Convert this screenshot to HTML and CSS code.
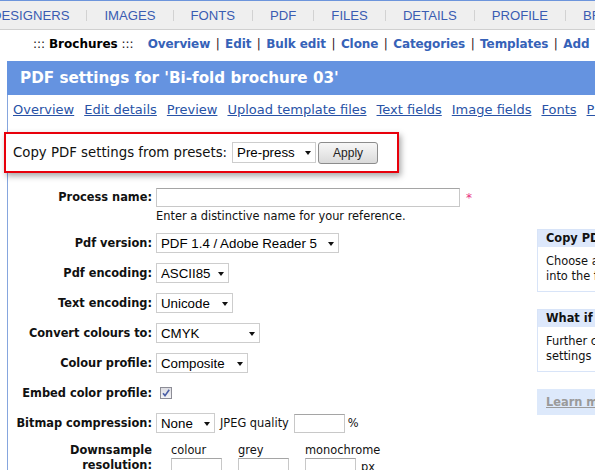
FILE: index.html
```html
<!DOCTYPE html>
<html>
<head>
<meta charset="utf-8">
<title>PDF settings</title>
<link rel="stylesheet" href="styles.css">
</head>
<body>
<nav class="topnav">
  <a class="first">DESIGNERS</a><span class="bar"></span>
  <a>IMAGES</a><span class="bar"></span>
  <a>FONTS</a><span class="bar"></span>
  <a>PDF</a><span class="bar"></span>
  <a>FILES</a><span class="bar"></span>
  <a>DETAILS</a><span class="bar"></span>
  <a>PROFILE</a><span class="bar"></span>
  <a>BROCHURES</a>
</nav>
<div class="subnav">
  <span class="crumb">::: <b>Brochures</b> :::</span>
  <a>Overview</a><span class="sep">|</span><a>Edit</a><span class="sep">|</span><a>Bulk edit</a><span class="sep">|</span><a>Clone</a><span class="sep">|</span><a>Categories</a><span class="sep">|</span><a>Templates</a><span class="sep">|</span><a>Add</a>
</div>
<div class="panel">
  <h1 class="title">PDF settings for 'Bi-fold brochure 03'</h1>
  <div class="tabs">
    <a>Overview</a><a>Edit details</a><a>Preview</a><a>Upload template files</a><a>Text fields</a><a>Image fields</a><a>Fonts</a><a>PDF settings</a>
  </div>
  <div class="preset">
    <span class="preset-label">Copy PDF settings from presets:</span>
    <span class="sel"><select class="w-pre tall"><option>Pre-press</option></select></span>
    <button class="apply" type="button">Apply</button>
  </div>
  <div class="columns">
    <form class="form">
      <div class="row row-top">
        <label class="lbl lbl-input">Process name:</label>
        <div class="ctl">
          <div class="line"><input class="txt w-name" type="text"><span class="req">*</span></div>
          <div class="help">Enter a distinctive name for your reference.</div>
        </div>
      </div>
      <div class="row">
        <label class="lbl">Pdf version:</label>
        <span class="sel"><select class="w-ver"><option>PDF 1.4 / Adobe Reader 5</option></select></span>
      </div>
      <div class="row">
        <label class="lbl">Pdf encoding:</label>
        <span class="sel"><select class="w-enc"><option>ASCII85</option></select></span>
      </div>
      <div class="row">
        <label class="lbl">Text encoding:</label>
        <span class="sel"><select class="w-txt"><option>Unicode</option></select></span>
      </div>
      <div class="row">
        <label class="lbl">Convert colours to:</label>
        <span class="sel"><select class="w-cmyk"><option>CMYK</option></select></span>
      </div>
      <div class="row">
        <label class="lbl">Colour profile:</label>
        <span class="sel"><select class="w-prof"><option>Composite</option></select></span>
      </div>
      <div class="row">
        <label class="lbl">Embed color profile:</label>
        <span class="check"><svg width="10" height="10" viewBox="0 0 10 10"><path d="M2 5.2 L4 7.6 L8.2 1.8" fill="none" stroke="#4b5fa6" stroke-width="1.6"/></svg></span>
      </div>
      <div class="row">
        <label class="lbl">Bitmap compression:</label>
        <span class="sel"><select class="w-bmp"><option>None</option></select></span>
        <span class="small ml5">JPEG quality</span>
        <input class="txt w-q ml5" type="text">
        <span class="small ml3">%</span>
      </div>
      <div class="row row-top">
        <label class="lbl lbl-two">Downsample<br>resolution:</label>
        <div class="ds">
          <div class="ds-col"><span class="small">colour</span><input class="txt w-q" type="text"></div>
          <div class="ds-col"><span class="small">grey</span><input class="txt w-q" type="text"></div>
          <div class="ds-col"><span class="small">monochrome</span><input class="txt w-q" type="text"></div>
          <span class="small px">px</span>
        </div>
      </div>
    </form>
    <aside class="side">
      <div class="box">
        <div class="box-head">Copy PDF settings</div>
        <div class="box-body">Choose a preset and press Apply to<br>into the form below.</div>
      </div>
      <div class="box">
        <div class="box-head">What if the preset doesn't fit?</div>
        <div class="box-body">Further changes can be made to the<br>settings afterwards.</div>
      </div>
      <div class="learn"><a>Learn more about PDF settings</a></div>
    </aside>
  </div>
</div>
</body>
</html>
```
FILE: styles.css
```css
html, body {
  margin: 0;
  padding: 0;
  overflow: hidden;
  background: #fff;
}
body {
  width: 595px;
  height: 470px;
  font-family: "DejaVu Sans", Verdana, sans-serif;
  color: #111;
}

/* top navigation */
.topnav {
  display: flex;
  align-items: center;
  height: 27px;
  padding-top: 1px;
  box-sizing: content-box;
  background: #efefef;
  border-top: 1px solid #6d95dc;
  border-bottom: 1px solid #d0d0d0;
  white-space: nowrap;
  overflow: hidden;
  font: 13.15px "Liberation Sans", Arial, sans-serif;
}
.topnav a {
  color: #3a5cb2;
  padding: 0 17px;
  flex: none;
}
.topnav a.first {
  margin-left: -25px;
}
.topnav .bar {
  flex: none;
  width: 1px;
  height: 11px;
  background: #d2d2d2;
}

/* sub navigation */
.subnav {
  padding: 7px 0 10px 33px;
  height: 14px;
  line-height: 14px;
  font-size: 12px;
  font-weight: bold;
  letter-spacing: -0.1px;
  white-space: nowrap;
  overflow: hidden;
}
.subnav .crumb {
  font-weight: normal;
  color: #111;
  letter-spacing: 0;
  margin-right: 10px;
}
.subnav .crumb b {
  font-weight: bold;
  color: #000;
}
.subnav a {
  color: #3662b8;
}
.subnav .sep {
  font-weight: normal;
  color: #2a1020;
  margin: 0 5.5px;
}

/* panel */
.panel {
  margin-left: 7px;
  border-left: 1px solid #86a6de;
}
.title {
  margin: 0 0 0 -1px;
  height: 34px;
  display: flex;
  align-items: center;
  padding-left: 13px;
  background: #6593e0;
  color: #fff;
  font-size: 15.2px;
  font-weight: bold;
  white-space: nowrap;
}
.tabs {
  display: flex;
  gap: 10px;
  margin-top: 7px;
  padding-left: 5px;
  height: 16px;
  line-height: 16px;
  font-size: 13px;
  white-space: nowrap;
  overflow: hidden;
}
.tabs a {
  color: #2852a6;
  text-decoration: underline;
  flex: none;
}

/* preset box */
.preset {
  display: flex;
  align-items: center;
  width: 384px;
  height: 37px;
  margin: 14px 0 0 -4px;
  padding-left: 7px;
  box-sizing: content-box;
  border: 2px solid #e8000b;
  box-shadow: 2px 3px 6px rgba(0, 0, 0, 0.35);
  background: #fff;
  font-size: 13.3px;
}
.preset-label {
  margin-right: 5px;
  white-space: nowrap;
}
.apply {
  margin-left: 2px;
  width: 60px;
  height: 22px;
  padding: 0;
  border: 1px solid #8c8c8c;
  border-radius: 3px;
  background: linear-gradient(#f7f7f7, #dadada);
  font: 12px "Liberation Sans", Arial, sans-serif;
  color: #222;
}

/* selects */
.sel {
  position: relative;
  display: inline-block;
  flex: none;
}
.sel::after {
  content: "";
  position: absolute;
  right: 5px;
  top: 9px;
  border-left: 3.5px solid transparent;
  border-right: 3.5px solid transparent;
  border-top: 4px solid #111;
}
.sel select {
  -webkit-appearance: none;
  appearance: none;
  display: block;
  height: 20px;
  margin: 0;
  padding: 0 16px 0 4px;
  border: 1px solid #cdcdcd;
  border-radius: 0;
  background: #fff;
  color: #000;
  font: 13.3px "Liberation Sans", Arial, sans-serif;
}
.sel select.tall {
  height: 21px;
}
.w-pre { width: 84px; }
.w-ver { width: 183px; }
.w-enc { width: 73px; }
.w-txt { width: 77px; }
.w-cmyk { width: 104px; }
.w-prof { width: 92px; }
.w-bmp { width: 59px; }

/* layout */
.columns {
  display: flex;
  align-items: flex-start;
  margin-top: 15px;
}
.form {
  flex: none;
  width: 529px;
  margin: 0;
}
.row {
  display: flex;
  align-items: center;
  min-height: 20px;
  margin-bottom: 10px;
}
.row-top {
  align-items: flex-start;
}
.lbl {
  flex: none;
  width: 144px;
  margin-right: 4px;
  text-align: right;
  font-size: 11.4px;
  font-weight: bold;
  line-height: 20px;
  color: #111;
  white-space: nowrap;
}
.lbl-input {
  line-height: 19px;
}
.lbl-two {
  line-height: 15px;
}
.ctl {
  display: flex;
  flex-direction: column;
}
.line {
  display: flex;
  align-items: center;
}
.txt {
  height: 19px;
  margin: 0;
  padding: 0 3px;
  box-sizing: border-box;
  border: 1px solid #c8c8c8;
  border-top-color: #a5a5a5;
  font: 12px "Liberation Sans", Arial, sans-serif;
  background: #fff;
}
.w-name { width: 304px; }
.w-q { width: 51px; }
.req {
  margin-left: 6px;
  color: #e8327f;
  font-size: 12px;
  line-height: 12px;
}
.help {
  margin-top: 2px;
  font-size: 11.4px;
  line-height: 14px;
}
.check {
  flex: none;
  display: flex;
  align-items: center;
  justify-content: center;
  width: 12px;
  height: 12px;
  margin-left: 4px;
  box-sizing: border-box;
  border: 1px solid #8d8d96;
  background: linear-gradient(#dcdce2, #f4f4f6);
}
.small {
  font-size: 11.4px;
  line-height: 15px;
  white-space: nowrap;
}
.ml5 { margin-left: 5px; }
.ml3 { margin-left: 3px; }
.ds {
  display: flex;
  align-items: flex-end;
  gap: 16px;
  margin-left: 15px;
}
.ds-col {
  flex: none;
  width: 51px;
  display: flex;
  flex-direction: column;
  align-items: flex-start;
}
.ds .px {
  margin-left: -11px;
  line-height: 19px;
}

/* sidebar */
.side {
  flex: none;
  width: 220px;
  margin-top: 41px;
}
.box {
  border: 1px solid #d8e4f8;
  margin-bottom: 17px;
  font-size: 11.4px;
}
.box-head {
  height: 17px;
  line-height: 17px;
  padding-left: 8px;
  background: #dde8fb;
  font-weight: bold;
  color: #111;
  white-space: nowrap;
}
.box-body {
  padding: 7px 8px 8px;
  line-height: 14.5px;
  white-space: nowrap;
}
.learn {
  height: 26px;
  line-height: 22px;
  padding: 2px 9px 0;
  box-sizing: border-box;
  background: #dde9fb;
  font-size: 11.4px;
  font-weight: bold;
  white-space: nowrap;
}
.learn a {
  color: #9a9a9a;
  text-decoration: underline;
}
```
